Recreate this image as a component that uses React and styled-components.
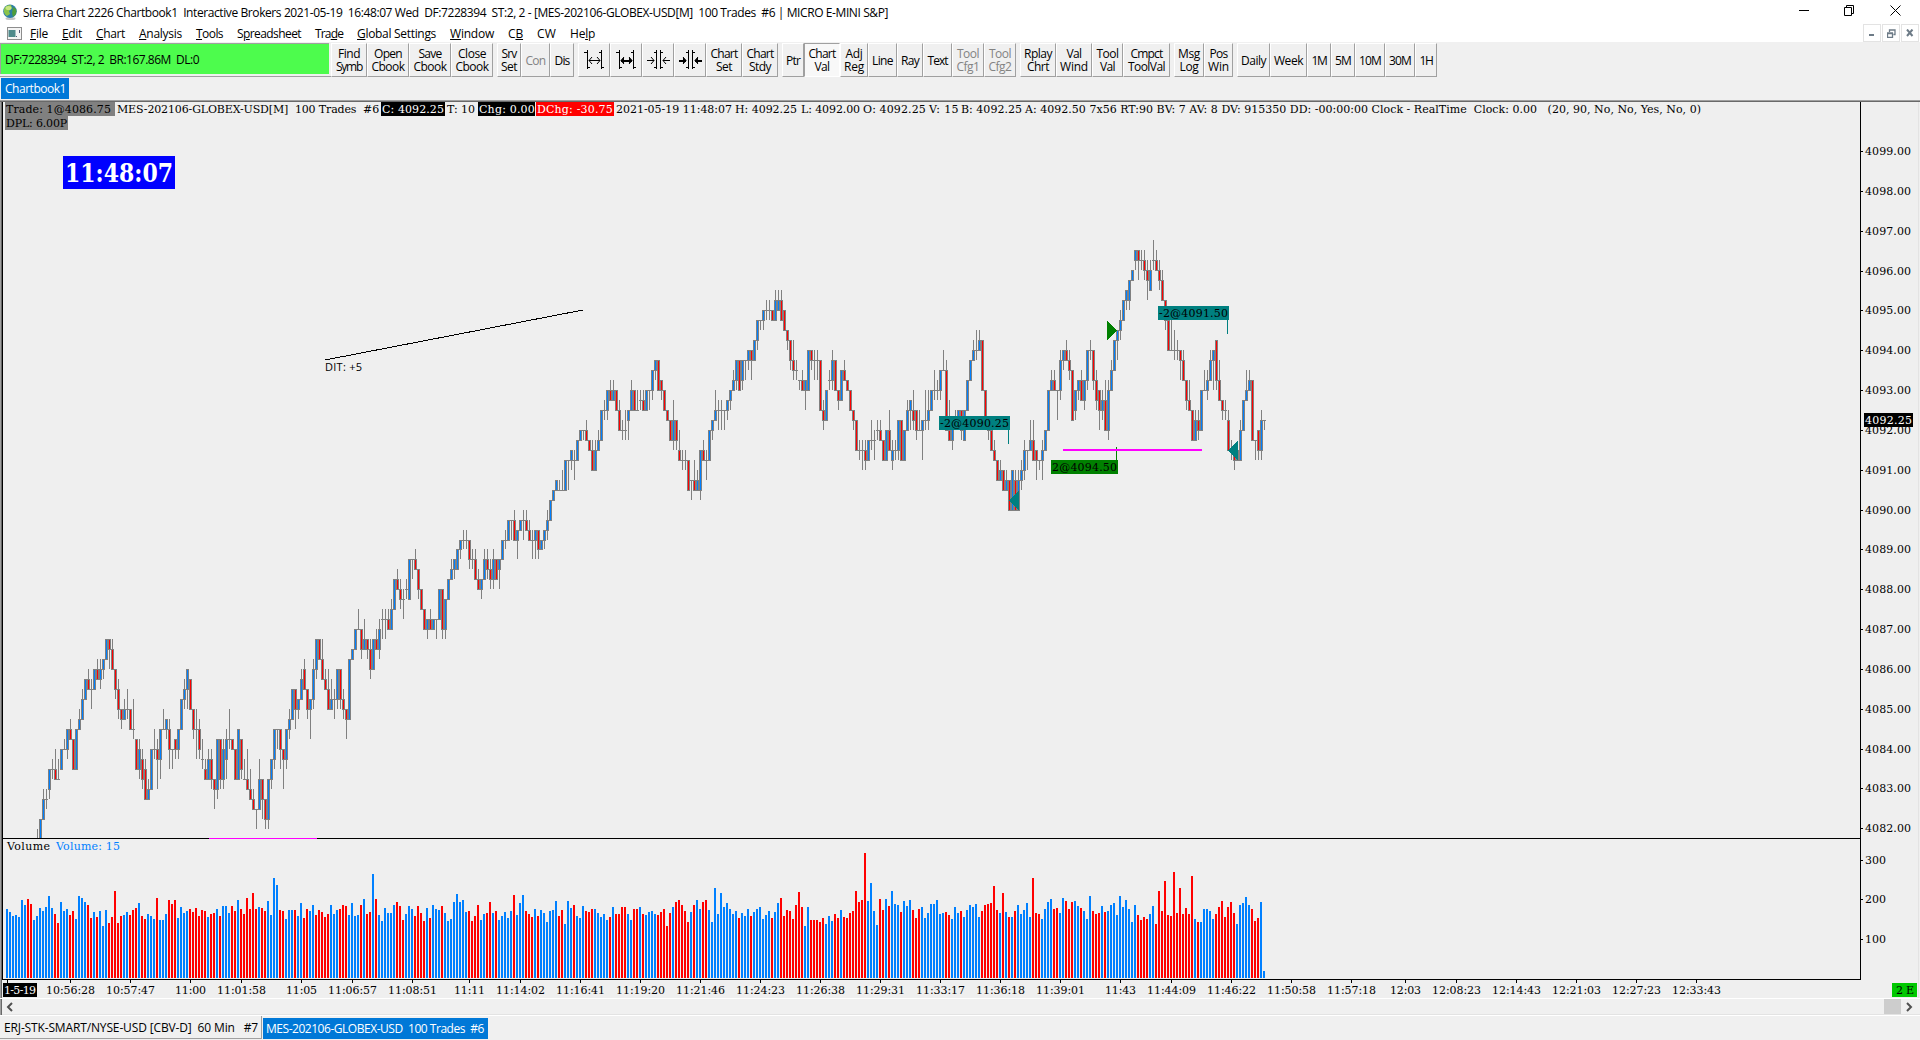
import React, { useLayoutEffect, useRef } from 'react'
import styled, { createGlobalStyle, css } from 'styled-components'

const colors = {
  face: '#f0f0f0',
  chart: '#efefef',
  shadow: '#a0a0a0',
  accent: '#0078d7',
  up: '#0080ff',
  down: '#ff0000',
  outline: '#808080',
  teal: '#008080',
  green: '#008000',
}

const ui = `'Open Sans', 'Noto Sans', sans-serif`
const slab = `'DejaVu Serif', serif`

const GlobalStyle = createGlobalStyle`
  * { box-sizing: border-box; }
  body { margin: 0; background: ${colors.face}; overflow: hidden; }
`

const Page = styled.div`
  width: 1920px;
  height: 1040px;
  display: flex;
  flex-direction: column;
  overflow: hidden;
  background: ${colors.face};
  font-family: ${ui};
  font-size: 12px;
  color: #000;
`

const TitleBar = styled.div`
  height: 24px;
  display: flex;
  align-items: center;
  padding-left: 3px;
  background: #fff;
`
const TitleText = styled.div`
  flex: 1;
  padding-left: 6px;
`
const WindowButtons = styled.div`
  display: flex;
  gap: 35px;
  padding: 0 19px 4px 0;
`
const MenuBar = styled.div`
  height: 18px;
  display: flex;
  align-items: center;
  padding-left: 7px;
  background: #fff;
`
const MenuItems = styled.div`
  flex: 1;
  display: flex;
  gap: 14px;
  padding-left: 8px;
`
const MdiButton = styled.div`
  width: 18px;
  height: 18px;
  margin-right: 1px;
  display: flex;
  align-items: center;
  justify-content: center;
  border: 1px solid #e3e3e3;
  background: #fff;
`
const Toolbar = styled.div`
  height: 35px;
  display: flex;
  align-items: flex-start;
  padding-top: 1px;
`
const StatusWrap = styled.div`
  width: 331px;
  height: 34px;
  border-bottom: 1px solid ${colors.shadow};
`
const Status = styled.div`
  width: 329px;
  height: 31px;
  display: flex;
  align-items: center;
  padding-left: 4px;
  border-left: 1px solid ${colors.shadow};
  border-top: 1px solid ${colors.shadow};
  background: #4dfc4d;
`
const ButtonGroup = styled.div`
  display: flex;
  margin-right: 4px;
`
const ToolButton = styled.div`
  width: ${(p) => p.$w}px;
  height: 34px;
  display: flex;
  flex-direction: column;
  align-items: center;
  justify-content: center;
  line-height: 13px;
  white-space: nowrap;
  color: ${(p) => (p.$off ? '#838383' : '#000')};
  border: 1px solid;
  border-color: #fff ${colors.shadow} ${colors.shadow} #fff;
  ${(p) => p.$pressed && css`
    background: #f8f8f8;
    border-color: ${colors.shadow} #fff #fff ${colors.shadow};
  `}
`
const BookRow = styled.div`
  height: 23px;
  padding: 1px 0 0 1px;
`
const BookTab = styled.div`
  width: 68px;
  height: 21px;
  padding-left: 4px;
  line-height: 21px;
  background: ${colors.accent};
  color: #fff;
`
const ChartFrame = styled.div`
  height: 898px;
  position: relative;
  border-top: 1px solid ${colors.shadow};
  box-shadow: inset 0 1px 0 #696969, inset 1px 0 0 ${colors.shadow}, inset 2px 0 0 #696969;
  background: ${colors.chart};
`
const Plot = styled.svg`
  display: block;
  shape-rendering: crispEdges;
  font-family: ${slab};
  font-size: 11px;
`
const InfoLines = styled.div`
  position: absolute;
  left: 5px;
  top: 1px;
  font-family: ${slab};
  font-size: 11px;
`
const InfoLine = styled.div`
  height: 14px;
  display: flex;
`
const Tag = styled.div`
  width: ${(p) => p.$w}px;
  height: 14px;
  padding-left: 1px;
  line-height: 16px;
  margin-right: ${(p) => p.$gap ?? 1}px;
  background: ${(p) => p.$bg || 'transparent'};
  color: ${(p) => p.$fg || '#000'};
`
const ScrollBar = styled.div`
  height: 18px;
  display: flex;
  align-items: center;
  border-top: 1px solid #fff;
  border-bottom: 1px solid #fff;
  box-shadow: inset 1px 0 0 ${colors.shadow}, inset 2px 0 0 #696969, inset 0 -1px 0 #e3e3e3;
  padding: 0 6px 1px 5px;
`
const ScrollTrack = styled.div`
  flex: 1;
  height: 15px;
  display: flex;
  justify-content: flex-end;
  padding-right: 3px;
`
const ScrollThumb = styled.div`
  width: 17px;
  background: #cdcdcd;
`
const TabRow = styled.div`
  height: 23px;
  display: flex;
`
const SheetTab = styled.div`
  width: ${(p) => p.$w}px;
  height: 23px;
  padding-left: 4px;
  line-height: 24px;
  border-right: 1px solid ${colors.shadow};
  border-bottom: 1px solid ${colors.shadow};
  ${(p) => p.$active && css`
    border: 0;
    height: 21px;
    margin: 2px 0 0 1px;
    padding-left: 3px;
    line-height: 21px;
    background: ${colors.accent};
    color: #fff;
  `}
`
const FitBox = styled.span`
  display: inline-block;
  white-space: pre;
`

// spreads the letters so that the text takes exactly w pixels
function Fit({ w, children }) {
  const ref = useRef(null)
  useLayoutEffect(() => {
    const el = ref.current
    el.style.letterSpacing = '0px'
    const natural = el.getBoundingClientRect().width
    el.style.letterSpacing = `${(w - natural) / el.textContent.length}px`
  }, [w])
  return <FitBox ref={ref}>{children}</FitBox>
}

const menu = [
  ['', 'F', 'ile', 18], ['', 'E', 'dit', 20], ['', 'C', 'hart', 29], ['', 'A', 'nalysis', 43],
  ['', 'T', 'ools', 27], ['S', 'p', 'readsheet', 64], ['Tra', 'd', 'e', 28], ['', 'G', 'lobal Settings', 79],
  ['', 'W', 'indow', 44], ['C', 'B', '', 15], ['CW', '', '', 19], ['He', 'l', 'p', 25],
]

// each entry: width, then the lines with their text widths
const toolbar = [
  [
    { w: 36, lines: [['Find', 22], ['Symb', 26]] },
    { w: 42, lines: [['Open', 28], ['Cbook', 33]] },
    { w: 42, lines: [['Save', 23], ['Cbook', 33]] },
    { w: 42, lines: [['Close', 28], ['Cbook', 33]] },
  ],
  [
    { w: 24, lines: [['Srv', 15], ['Set', 16]] },
    { w: 29, off: true, lines: [['Con', 20]] },
    { w: 24, lines: [['Dis', 15]] },
  ],
  [
    { w: 32, icon: 'out' },
    { w: 32, icon: 'outBold' },
    { w: 32, icon: 'in' },
    { w: 32, icon: 'inBold' },
    { w: 36, lines: [['Chart', 27], ['Set', 16]] },
    { w: 36, lines: [['Chart', 27], ['Stdy', 22]] },
  ],
  [
    { w: 22, lines: [['Ptr', 14]] },
    { w: 36, pressed: true, lines: [['Chart', 27], ['Val', 15]] },
    { w: 28, lines: [['Adj', 17], ['Reg', 20]] },
    { w: 29, lines: [['Line', 21]] },
    { w: 26, lines: [['Ray', 18]] },
    { w: 29, lines: [['Text', 20]] },
    { w: 32, off: true, lines: [['Tool', 22], ['Cfg1', 23]] },
    { w: 32, off: true, lines: [['Tool', 22], ['Cfg2', 23]] },
  ],
  [
    { w: 36, lines: [['Rplay', 28], ['Chrt', 22]] },
    { w: 36, lines: [['Val', 15], ['Wind', 28]] },
    { w: 31, lines: [['Tool', 22], ['Val', 15]] },
    { w: 47, lines: [['Cmpct', 32], ['ToolVal', 37]] },
  ],
  [
    { w: 30, lines: [['Msg', 22], ['Log', 19]] },
    { w: 29, lines: [['Pos', 18], ['Win', 21]] },
  ],
  [
    { w: 33, lines: [['Daily', 25]] },
    { w: 37, lines: [['Week', 29]] },
    { w: 24, lines: [['1M', 15]] },
    { w: 24, lines: [['5M', 16]] },
    { w: 30, lines: [['10M', 22]] },
    { w: 30, lines: [['30M', 22]] },
    { w: 22, lines: [['1H', 13]] },
  ],
]

// direction, high, body top, body bottom, low; in ticks of 0.25 below 4099.00
const candles = `
n68,69,69,70 u67,67,70,70 u64,65,67,67 n64,65,65,66 u62,62,64,65 n61,62,62,63 d60,62,63,63 n61,63,63,63
u60,60,62,62 n59,60,60,60 u58,58,60,61 d57,58,59,59 d59,59,62,62 u58,58,62,62 u56,57,58,58 u54,55,57,57
u53,53,55,55 d52,53,54,54 n53,54,54,56 u52,52,54,54 d51,52,53,53 u51,52,53,54 u51,51,52,53 u49,49,51,51
d49,49,50,52 d49,50,52,52 d52,52,54,55 d53,54,56,57 d56,56,57,58 u55,56,57,57 n54,56,56,57 d56,56,58,58
n55,58,58,59 d59,59,62,62 u59,60,62,63 d60,61,63,64 d61,62,65,65 u63,64,65,65 u60,60,64,64 n58,60,60,61
d59,60,61,64 u58,58,61,63 n56,58,58,58 u57,57,58,59 d57,58,60,62 n60,60,60,62 d59,59,60,61 u58,58,60,61
u55,55,58,58 u53,54,55,56 u52,52,54,56 d53,53,56,56 d56,56,58,59 n56,58,58,61 d57,58,60,61 n59,61,61,62
d61,62,63,63 u60,61,63,63 d60,61,63,64 d63,63,64,66 u59,59,64,65 d59,59,63,64 u59,60,63,64 u58,59,61,63
n56,59,59,60 d59,59,60,60 d60,60,63,63 u58,58,63,63 d59,59,62,63 n61,63,63,63 d60,63,64,64 d62,64,65,65
d64,65,66,66 n66,66,66,68 u61,63,66,66 d63,63,65,67 d65,65,67,68 u63,63,67,68 u61,61,63,64 u58,58,61,62
n58,58,58,60 d58,58,60,62 d60,60,61,64 u58,58,61,62 u56,57,58,59 u54,54,57,57 d54,54,56,58 u55,55,56,57
u52,53,55,55 d51,52,54,54 d54,54,56,57 u55,55,56,59 u51,52,55,56 u49,49,52,53 d49,49,51,51 d49,51,53,53
d52,53,54,54 d52,54,56,56 u53,55,56,56 n54,55,55,57 u52,52,55,56 d52,52,55,56 d54,55,56,57 d56,56,57,59
u51,51,57,57 u50,50,51,51 u48,48,50,50 n46,48,48,48 d48,48,50,51 u47,49,50,50 d49,49,50,51 d49,50,52,53
u49,49,52,52 d48,49,50,50 u47,48,50,51 n46,47,47,49 n46,47,47,49 d46,47,48,48 u45,46,48,48 u43,43,46,46
d42,43,44,44 d43,44,45,46 n44,45,45,47 n43,44,44,45 u41,41,45,45 n41,41,41,43 d40,41,42,42 d42,42,44,45
d44,44,46,46 d46,46,48,48 u47,47,48,49 d46,47,48,48 u47,47,48,48 n47,47,47,49 u44,44,47,47 d44,44,48,49
u45,45,48,49 u43,43,45,45 u41,42,43,43 u41,41,42,43 u40,40,42,42 u39,39,40,41 n38,39,39,40 n38,39,39,40
d39,39,41,42 n40,41,41,42 d40,41,43,43 d42,43,44,44 u43,43,44,45 u40,41,43,43 d40,41,42,43 d41,42,43,44
u40,41,43,44 d41,41,43,43 u41,41,42,44 u39,39,41,41 n38,39,39,40 u37,37,39,39 n37,37,37,39 d36,37,39,39
u38,38,39,41 u37,37,38,38 n36,37,37,39 d36,37,38,38 d37,38,39,39 n38,39,39,41 u38,38,39,41 d38,38,40,41
u39,39,40,40 u38,38,39,40 u36,37,38,39 u35,35,37,37 u34,34,35,35 u33,33,34,34 n33,34,34,34 n32,34,34,34
u31,31,34,34 n31,31,31,34 u30,30,31,32 n30,31,31,33 u29,29,31,31 u28,28,29,29 n28,28,28,29 d27,28,29,29
d29,29,30,30 d29,30,32,32 u29,30,32,32 u28,29,30,30 u26,26,29,29 n25,26,26,27 u24,24,26,27 d23,24,25,25
u23,24,25,25 d24,24,26,26 d25,26,28,28 n27,28,28,29 n26,28,28,29 u26,26,27,29 u23,24,26,26 d24,24,26,26
n24,26,26,26 n24,25,25,26 d24,25,26,26 u24,24,26,26 n24,24,24,26 u22,22,24,25 u21,21,22,23 d21,21,24,24
d23,23,24,25 d24,24,26,26 d26,26,27,27 d27,27,29,29 u25,27,29,30 d27,27,29,30 d28,30,31,31 n30,31,31,32
n30,31,31,32 d31,31,34,34 n33,33,33,35 d31,33,34,34 u32,33,34,34 u30,30,34,35 d29,30,31,31 n30,31,31,33
u28,28,31,31 u27,27,28,29 u24,26,27,27 n25,26,26,28 n25,26,26,28 n26,26,26,28 u25,25,26,27 u24,24,25,26
u22,23,24,24 u21,21,23,24 d21,21,24,24 u21,21,23,24 n21,21,21,23 u20,20,21,22 d20,20,21,23 u19,19,21,21
u17,17,19,20 n17,17,17,18 u16,16,17,18 n15,16,16,17 n15,16,16,17 d16,16,17,17 u14,15,17,17 u14,15,16,16
d14,15,17,17 d16,16,18,18 d18,18,19,20 d19,19,21,22 d19,21,22,23 n21,22,22,23 n23,23,23,24 d22,23,24,24
u23,23,24,26 u20,20,24,24 d20,20,21,22 n20,21,21,23 n20,21,21,23 d21,21,26,26 d25,26,27,28 u24,24,27,27
n22,23,23,24 u20,21,23,24 d21,21,24,24 d24,24,25,26 u22,22,25,25 d21,22,23,23 d23,23,24,24 d24,24,26,26
d26,26,27,28 d27,27,30,30 n29,30,30,31 n29,30,30,32 d29,30,31,32 u29,29,31,31 n27,29,29,30 n28,29,29,31
n27,28,28,29 d27,28,29,29 d29,29,31,31 u28,28,31,31 d26,28,30,30 u29,30,31,32 n29,30,30,31 u27,27,30,31
d27,27,31,31 u28,28,31,31 u25,26,28,28 u25,25,26,28 d24,26,27,28 d26,26,28,29 n26,28,28,28 u27,27,28,31
n24,27,27,28 u24,26,27,28 u24,24,26,26 n22,24,24,25 n23,24,24,25 u22,22,24,25 n20,22,22,22 d21,22,28,28
d25,28,29,29 u27,27,29,30 n26,27,27,28 u26,26,27,28 d26,26,28,29 u26,26,29,29 u23,23,26,26 u21,21,23,23
u19,20,21,21 n18,20,20,21 u18,19,20,20 d19,19,24,24 d24,24,27,27 d27,27,28,29 d28,28,30,30 d29,30,31,31
d31,31,33,33 u31,32,33,33 d32,32,34,34 u32,33,34,34 d33,33,36,36 u32,32,36,36 d32,33,36,36 u32,33,36,36
u31,32,33,34 u29,30,32,33 n30,30,30,32 u27,29,30,30 d27,29,31,31 d30,30,31,33 n31,31,31,32 u29,30,31,33
u28,28,30,30 u24,24,28,28 u22,23,24,24 d22,23,24,24 n24,24,24,27 u20,21,24,25 u20,20,21,22 d19,20,21,21
d20,21,22,23 d22,22,27,27 u24,24,26,27 u23,23,24,25 d22,23,25,25 u23,23,25,26 u20,20,23,24 n19,20,20,21
d20,20,23,24 d22,23,25,26 d24,24,26,28 u24,25,26,27 d23,25,28,28 u23,24,28,29 u21,22,24,24 u19,19,22,22
u18,18,19,21 u16,17,18,19 u15,15,17,17 u14,14,15,16 u13,13,15,16 u12,12,13,13 u10,10,11,12 d10,10,11,13
n10,11,11,12 d10,11,12,13 d11,12,13,15 u11,12,14,14 n9,11,11,12 d10,11,12,12 d11,12,13,14 d12,13,15,15
d15,15,17,18 d17,17,20,20 n17,20,20,20 n18,20,20,21 n19,20,20,21 d20,20,21,23 d20,21,23,23 d23,23,25,26
d23,25,26,26 d26,26,29,29 u26,27,29,29 d26,27,28,29 u24,24,28,28 n22,24,24,24 u22,23,24,25 u20,21,23,23
u20,20,21,24 d19,19,23,24 d21,23,25,25 d25,25,26,27 n25,26,26,27 d26,27,30,30 n29,30,30,31 d30,30,31,32
u30,30,31,31 u27,28,31,31 u25,25,28,28 u22,24,25,25 u22,23,24,24 d23,23,29,29 n29,29,29,31 d28,28,30,31
u26,27,30,31 n27,27,27,28
`.trim().split(/\s+/).map((t) => [t[0], ...t.slice(1).split(',').map(Number)])

// colour and bar top, in thirds of a pixel under y = 830
const volumes = `
b237 b246 b258 b255 b261 b210 b225 r207 r222 b270 b258 b234 b243 b231 b198 b234 r252 r279 b216 b243
b237 r255 r243 b267 b198 b204 b216 r225 r264 b246 r261 b243 b288 b240 r279 r261 r183 r279 r258 b255
b246 r255 r240 r234 b219 r258 r267 b252 b258 b267 r204 b270 b270 b252 r210 r222 r210 b264 b231 b249
b243 r237 r246 r234 r258 r240 r243 b261 r252 r249 b237 r258 b228 b228 b249 r228 r243 b210 r237 r252
r204 r237 r189 r237 b231 r234 r243 b213 b255 b144 b165 r240 r243 b267 b240 b240 r240 b258 b219 r264
r237 b243 b225 r255 r240 r246 r261 r252 b225 b252 b240 r237 r225 r228 b255 b219 b258 b255 r225 b207
r252 r246 b132 r207 b255 b273 b234 b249 b249 b225 r216 r228 r270 b252 b228 b237 r258 r228 r249 r273
b234 r264 b225 b237 b240 r228 b249 b273 b267 b216 b192 b216 b210 b246 r243 r273 r258 r225 b270 b252
r249 r216 b249 r243 b270 b258 b246 b264 b243 r195 b255 b219 b195 r243 r252 r261 b237 r258 b240 b249
b276 b243 b240 b213 r258 r240 b282 b213 b234 r225 b258 b264 b228 r243 r246 r237 b237 b249 b261 b252
b270 r261 b231 r252 r252 r231 r231 b252 b270 r237 r237 b231 r252 b255 b246 b243 b252 r255 r246 r237
r288 r249 b231 r216 r210 r225 r243 r276 b246 r225 b210 b237 r216 r210 b240 b276 b174 b252 b189 b231
b219 b237 b252 b243 r264 b249 b258 b237 r258 b246 b237 b231 b267 b255 b243 r264 b246 b219 r204 r258
r240 r243 r267 r225 r186 r231 b288 b231 r270 r270 r270 r276 r264 b282 b258 b273 r252 r264 b240 r261
r264 r249 r243 r183 r216 r210 r69 b213 b159 b243 b285 r207 r240 b207 r228 b183 b222 b225 r246 b213
b228 b210 r240 r264 r237 b231 b264 b249 b222 b222 b210 b252 b249 r246 r255 b267 b231 b249 r243 b261
b240 b225 b231 b222 b261 r243 r225 r222 r219 r168 r240 b249 r189 b246 r261 b261 r243 b225 b252 b240
b219 b261 r144 r249 r252 b267 b237 b216 b207 r237 r234 b249 b204 r213 r237 r216 b213 b228 r234 b243
b267 b198 r243 r252 r249 b228 r246 b243 b225 b219 b255 b198 b231 b210 b237 b276 b225 r255 r270 r261
r267 b252 b228 r282 r183 r243 r153 r255 r258 r126 r249 r174 r252 r234 r252 r138 b267 r276 b276 b237
b237 b243 b267 r252 r231 r213 r261 r231 r216 r249 b282 b225 b219 b201 b225 r237 r273 r264 b216 b423
`.trim().split(/\s+/).map((t) => [t[0], Number(t.slice(1))])

const times = [
  [70, '10:56:28'], [130, '10:57:47'], [190, '11:00'], [241, '11:01:58'], [301, '11:05'], [352, '11:06:57'],
  [412, '11:08:51'], [469, '11:11'], [520, '11:14:02'], [580, '11:16:41'], [640, '11:19:20'], [700, '11:21:46'],
  [760, '11:24:23'], [820, '11:26:38'], [880, '11:29:31'], [940, '11:33:17'], [1000, '11:36:18'], [1060, '11:39:01'],
  [1120, '11:43'], [1171, '11:44:09'], [1231, '11:46:22'], [1291, '11:50:58'], [1351, '11:57:18'], [1405, '12:03'],
  [1456, '12:08:23'], [1516, '12:14:43'], [1576, '12:21:03'], [1636, '12:27:23'], [1696, '12:33:43'],
]

const tickY = (n) => Math.floor(150.79 + 9.98 * n)

function Candle({ x, data }) {
  const [dir, high, top, bottom, low] = data
  const t = tickY(top)
  const b = tickY(bottom)
  return (
    <g>
      <rect x={x} y={tickY(high)} width="1" height={tickY(low) - tickY(high)} fill={colors.outline} />
      <rect x={x - 1} y={t} width="3" height={b - t + 1} fill={colors.outline} />
      {dir !== 'n' && (
        <rect x={x} y={t + 1} width="1" height={b - t - 1} fill={dir === 'u' ? colors.up : colors.down} />
      )}
    </g>
  )
}

function Label({ x, y, w, h = 14, fill, color = '#000', children }) {
  return (
    <g>
      <rect x={x} y={y} width={w} height={h} fill={fill} />
      <text x={x + 1} y={y + 11} textLength={w - 2} fill={color}>{children}</text>
    </g>
  )
}

function PriceChart() {
  return (
    <Plot width="1920" height="897" viewBox="0 101 1920 897">
      <defs>
        <clipPath id="prices">
          <rect x="3" y="102" width="1857" height="736" />
        </clipPath>
      </defs>
      <rect x="2" y="102" width="1" height="878" />
      <rect x="1918" y="102" width="1" height="896" fill="#e3e3e3" />
      <rect x="2" y="838" width="1858" height="1" />
      <rect x="2" y="979" width="1859" height="1" />
      <rect x="1860" y="102" width="1" height="878" />

      <g clipPath="url(#prices)">
        {candles.map((c, i) => <Candle key={i} x={37 + 3 * i} data={c} />)}
      </g>
      {volumes.map(([c, top], i) => (
        <rect key={i} x={6 + 3 * i} y={830 + top / 3} width="2" height={148 - top / 3} fill={c === 'b' ? colors.up : colors.down} />
      ))}

      <rect x="209" y="838" width="108" height="1" fill="#f0f" />
      <line x1="325" y1="360" x2="583" y2="310" stroke="#000" />
      <text x="325" y="371" textLength="37" fontFamily="Open Sans">DIT: +5</text>

      <rect x="1227" y="320" width="1" height="14" fill={colors.teal} />
      <Label x={1158} y={306} w={71} fill={colors.teal}>-2@4091.50</Label>
      <rect x="1008" y="430" width="1" height="14" fill={colors.teal} />
      <Label x={939} y={416} w={71} fill={colors.teal}>-2@4090.25</Label>
      <rect x="1116" y="447" width="1" height="14" fill={colors.green} />
      <rect x="1063" y="449" width="139" height="2" fill="#f0f" />
      <Label x={1051} y={460} w={67} fill={colors.green}>2@4094.50</Label>
      <polygon points="1107,321 1107,340 1117,330.5" fill={colors.green} />
      <polygon points="1019,491 1019,510 1009,500.5" fill={colors.teal} />
      <polygon points="1238,441 1238,460 1228,450.5" fill={colors.teal} />

      <rect x="63" y="156" width="112" height="33" fill="#00f" />
      <text x="65" y="182" fontSize="26" fontWeight="bold" fill="#fff" textLength="108" lengthAdjust="spacingAndGlyphs">11:48:07</text>

      {Array.from({ length: 18 }, (_, i) => (
        <g key={i}>
          <rect x="1861" y={Math.round(151 + i * 39.84)} width="2" height="1" />
          <text x="1865" y={Math.round(155 + i * 39.84)} textLength="46">{(4099 - i).toFixed(2)}</text>
        </g>
      ))}
      <Label x={1864} y={413} w={49} fill="#000" color="#fff">4092.25</Label>
      {[[300, 860], [200, 899], [100, 939]].map(([v, y]) => (
        <g key={v}>
          <rect x="1861" y={y} width="2" height="1" />
          <text x="1865" y={y + 4} textLength="21">{v}</text>
        </g>
      ))}

      <text x="7" y="850" textLength="43">Volume</text>
      <text x="56" y="850" textLength="64" fill={colors.up}>Volume: 15</text>

      <rect x="7" y="980" width="1" height="3" />
      {times.map(([x, t]) => {
        const w = t.length > 5 ? 49 : 31
        return (
          <g key={t}>
            <rect x={x} y="980" width="1" height="3" />
            <text x={x - w / 2 + 0.5} y="994" textLength={w}>{t}</text>
          </g>
        )
      })}
      <Label x={3} y={983} w={34} fill="#000" color="#fff">1-5-19</Label>
      <rect x="1892" y="983" width="25" height="14" fill="#00c800" />
      <text x="1896" y="994" textLength="18">2 E</text>
    </Plot>
  )
}

function SpacingIcon({ kind }) {
  const bold = kind.endsWith('Bold')
  const out = kind.startsWith('out')
  return (
    <svg width="24" height="20" viewBox="0 0 24 20" fill="none" stroke="#000" shapeRendering="crispEdges">
      {out ? (
        <>
          <path d="M5.5 0V19M2 2.5H5M6 17.5H8M19.5 0V19M17 2.5H19M20 17.5H22" />
          <path d="M7 10.5H18" strokeWidth={bold ? 2 : 1} />
          <path d="M10 7L7 10.5L10 14M15 7L18 10.5L15 14" fill={bold ? '#000' : 'none'} shapeRendering="auto" />
        </>
      ) : (
        <>
          <path d="M10.5 0V19M14.5 0V19M8 2.5H10M8 17.5H10M15 2.5H17M15 17.5H17" />
          <path d="M1 10.5H8M17 10.5H24" strokeWidth={bold ? 2 : 1} />
          <path d="M5 7L8 10.5L5 14M20 7L17 10.5L20 14" fill={bold ? '#000' : 'none'} shapeRendering="auto" />
        </>
      )}
    </svg>
  )
}

function Globe() {
  return (
    <svg width="14" height="16" viewBox="0 0 14 16">
      <ellipse cx="7.5" cy="14.5" rx="5" ry="1.5" fill="#c4c4c4" />
      <circle cx="7" cy="7.2" r="6.8" fill="#2d7fa8" />
      <path d="M1 5C2 2 5 0.6 8 1L9 4L6 7L7 10L4 12C1.500 10.500 0.400 8 1 5Z" fill="#8bc34a" />
      <path d="M10 3L13 5C14 8 13 11 10 13L9 9Z" fill="#4f9d3c" />
      <ellipse cx="5.500" cy="4" rx="3" ry="2" fill="#e4f59a" opacity=".7" />
    </svg>
  )
}

export default function App() {
  return (
    <Page>
      <GlobalStyle />
      <TitleBar>
        <Globe />
        <TitleText>
          <Fit w={865}>{'Sierra Chart 2226 Chartbook1  Interactive Brokers 2021-05-19  16:48:07 Wed  DF:7228394  ST:2, 2 - [MES-202106-GLOBEX-USD[M]  100 Trades  #6 | MICRO E-MINI S&P]'}</Fit>
        </TitleText>
        <WindowButtons>
          <svg width="11" height="11" stroke="#000" fill="none"><path d="M1 5.500H11" /></svg>
          <svg width="11" height="11" stroke="#000" fill="none"><path d="M0.500 2.500H7.500V10.500H0.500ZM2.500 2.500V0.500H9.500V8.500H7.500" /></svg>
          <svg width="11" height="11" stroke="#000" fill="none"><path d="M0.500 0.500L10.500 10.500M10.500 0.500L0.500 10.500" /></svg>
        </WindowButtons>
      </TitleBar>
      <MenuBar>
        <svg width="15" height="13" viewBox="0 0 15 13">
          <rect x="0.5" y="0.5" width="14" height="12" fill="#f4f4f4" stroke="#8d8d8d" />
          <rect x="1.500" y="3" width="7" height="7" fill="#4f8a8b" />
          <path d="M9 9.500H10M12.500 3V6" stroke="#557" />
        </svg>
        <MenuItems>
          {menu.map(([a, u, b, w]) => <Fit key={a + u + b} w={w}>{a}<u>{u}</u>{b}</Fit>)}
        </MenuItems>
        <MdiButton><svg width="8" height="8"><path d="M1 6H6" stroke="#6d7b87" strokeWidth="2" /></svg></MdiButton>
        <MdiButton><svg width="9" height="9" fill="none" stroke="#6d7b87"><path d="M0.500 4.500H5.500V8.500H0.500ZM0 4H6M2.500 3V1H8V5.500H6.500" strokeWidth="1.300" /></svg></MdiButton>
        <MdiButton><svg width="8" height="8"><path d="M1 0.500L6.500 7M6.500 0.500L1 7" stroke="#6d7b87" strokeWidth="2" /></svg></MdiButton>
      </MenuBar>
      <Toolbar>
        <StatusWrap>
          <Status><Fit w={194}>{'DF:7228394  ST:2, 2  BR:167.86M  DL:0'}</Fit></Status>
        </StatusWrap>
        {toolbar.map((group, g) => (
          <ButtonGroup key={g}>
            {group.map((b, i) => (
              <ToolButton key={i} $w={b.w} $off={b.off} $pressed={b.pressed}>
                {b.icon && <SpacingIcon kind={b.icon} />}
                {b.lines && b.lines.map(([t, w]) => <Fit key={t} w={w}>{t}</Fit>)}
              </ToolButton>
            ))}
          </ButtonGroup>
        ))}
      </Toolbar>
      <BookRow>
        <BookTab><Fit w={61}>Chartbook1</Fit></BookTab>
      </BookRow>
      <ChartFrame>
        <PriceChart />
        <InfoLines>
          <InfoLine>
            <Tag $w={110} $bg={colors.outline}><Fit w={105}>Trade: 1@4086.75</Fit></Tag>
            <Tag $w={264}><Fit w={262}>{'MES-202106-GLOBEX-USD[M]  100 Trades  #6'}</Fit></Tag>
            <Tag $w={64} $bg="#000" $fg="#fff"><Fit w={62}>C: 4092.25</Fit></Tag>
            <Tag $w={31}><Fit w={28}>T: 10</Fit></Tag>
            <Tag $w={57} $bg="#000" $fg="#fff"><Fit w={56}>Chg: 0.00</Fit></Tag>
            <Tag $w={78} $bg="#f00" $fg="#fff"><Fit w={76}>DChg: -30.75</Fit></Tag>
            <Tag $w={118}><Fit w={116}>2021-05-19 11:48:07</Fit></Tag>
            <Tag $w={65}><Fit w={62}>H: 4092.25</Fit></Tag>
            <Tag $w={62} $gap={0}><Fit w={59}>L: 4092.00</Fit></Tag>
            <Tag $w={65}><Fit w={63}>O: 4092.25</Fit></Tag>
            <Tag $w={32} $gap={0}><Fit w={30}>V: 15</Fit></Tag>
            <Tag $w={63}><Fit w={61}>B: 4092.25</Fit></Tag>
            <Tag $w={680}><Fit w={676}>{'A: 4092.50 7x56 RT:90 BV: 7 AV: 8 DV: 915350 DD: -00:00:00 Clock - RealTime  Clock: 0.00   (20, 90, No, No, Yes, No, 0)'}</Fit></Tag>
          </InfoLine>
          <InfoLine>
            <Tag $w={63} $bg={colors.outline}><Fit w={61}>DPL: 6.00P</Fit></Tag>
          </InfoLine>
        </InfoLines>
      </ChartFrame>
      <ScrollBar>
        <svg width="10" height="10" fill="none" stroke="#505050" strokeWidth="2"><path d="M7 1L3 5L7 9" /></svg>
        <ScrollTrack><ScrollThumb /></ScrollTrack>
        <svg width="10" height="10" fill="none" stroke="#505050" strokeWidth="2"><path d="M3 1L7 5L3 9" /></svg>
      </ScrollBar>
      <TabRow>
        <SheetTab $w={262}><Fit w={254}>{'ERJ-STK-SMART/NYSE-USD [CBV-D]  60 Min   #7'}</Fit></SheetTab>
        <SheetTab $w={225} $active><Fit w={218}>{'MES-202106-GLOBEX-USD  100 Trades  #6'}</Fit></SheetTab>
      </TabRow>
    </Page>
  )
}
